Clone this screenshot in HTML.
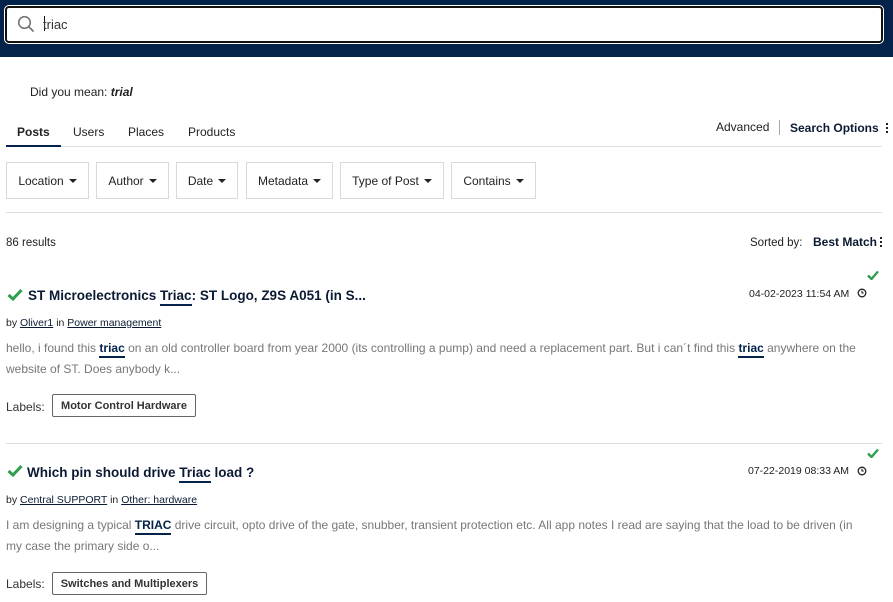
<!DOCTYPE html>
<html><head><meta charset="utf-8">
<style>
*{margin:0;padding:0;box-sizing:border-box}
body{width:893px;height:602px;overflow:hidden;background:#fff;font-family:"Liberation Sans",Arial,sans-serif;color:#222;position:relative}
.hdr{position:absolute;left:0;top:0;width:893px;height:57px;background:#03234b}
.sb{position:absolute;left:5px;top:6px;width:878px;height:37px;background:#fff;border:2px solid #111;border-radius:4px;box-shadow:0 0 0 1px #fff}
.sb .q{position:absolute;left:36px;top:9px;font-size:13px;color:#333}
.caret{position:absolute;left:37px;top:8px;width:1px;height:15px;background:#111}
.abs{position:absolute;white-space:nowrap}
.tab{font-size:12px;color:#222}
.fb{position:absolute;top:162px;height:37px;border:1px solid #d6d9de;font-size:12px;color:#222;display:flex;align-items:center;justify-content:center}
.tri{display:inline-block;width:0;height:0;border-left:4px solid transparent;border-right:4px solid transparent;border-top:4px solid #222;margin-left:5px;vertical-align:middle}
.line{position:absolute;left:6px;width:876px;height:1px;background:#dcdfe4}
.title{font-size:13.5px;font-weight:bold;color:#0b1a33}
.u{border-bottom:2px solid #03234b;padding-bottom:1px}
.meta{font-size:10.5px;color:#222}
.meta a{color:#0b1a33;text-decoration:underline}
.body{font-size:12px;color:#777;line-height:21px}
.body b{color:#03234b;font-weight:bold}
.lbl{font-size:12px;color:#333}
.chip{position:absolute;height:23px;border:1px solid #666;border-radius:2px;font-size:11px;font-weight:bold;color:#333;display:flex;align-items:center;justify-content:center}
.date{font-size:10.5px;color:#222}
</style></head><body>
<div class="hdr"></div>
<div class="sb">
<svg style="position:absolute;left:10px;top:7px" width="18" height="18" viewBox="0 0 18 18"><circle cx="7.5" cy="7.5" r="5.8" fill="none" stroke="#777" stroke-width="1.6"/><line x1="11.8" y1="11.8" x2="16" y2="16" stroke="#777" stroke-width="1.8" stroke-linecap="round"/></svg>
<div class="caret"></div><div class="q">triac</div></div>

<div class="abs" style="left:30px;top:85px;font-size:12px">Did you mean: <i style="font-weight:bold">trial</i></div>

<div class="abs tab" style="left:17px;top:125px;font-weight:bold">Posts</div>
<div class="abs tab" style="left:73px;top:125px">Users</div>
<div class="abs tab" style="left:128px;top:125px">Places</div>
<div class="abs tab" style="left:188px;top:125px">Products</div>
<div class="line" style="top:146px"></div>
<div class="abs" style="left:6px;top:145px;width:55px;height:2px;background:#03234b"></div>

<div class="abs" style="left:716px;top:120px;font-size:12px">Advanced</div>
<div class="abs" style="left:779px;top:120px;width:1px;height:15px;background:#aaa"></div>
<div class="abs" style="left:790px;top:121px;font-size:12px;font-weight:bold;color:#0b1a33">Search Options</div>
<div class="abs" style="left:886px;top:123px;width:2px;height:10px;background:linear-gradient(#222 0,#222 2px,#fff 2px,#fff 4px,#222 4px,#222 6px,#fff 6px,#fff 8px,#222 8px)"></div>

<div class="fb" style="left:6px;width:83px">Location<span class="tri"></span></div>
<div class="fb" style="left:96px;width:73px">Author<span class="tri"></span></div>
<div class="fb" style="left:176px;width:62px">Date<span class="tri"></span></div>
<div class="fb" style="left:246px;width:87px">Metadata<span class="tri"></span></div>
<div class="fb" style="left:340px;width:104px">Type of Post<span class="tri"></span></div>
<div class="fb" style="left:451px;width:85px">Contains<span class="tri"></span></div>
<div class="line" style="top:212px"></div>

<div class="abs" style="left:6px;top:237px;font-size:11.5px">86 results</div>
<div class="abs" style="left:750px;top:237px;font-size:11.5px">Sorted by:</div>
<div class="abs" style="left:813px;top:235px;font-size:12px;font-weight:bold;color:#0b1a33">Best Match</div>
<div class="abs" style="left:880px;top:237px;width:2px;height:10px;background:linear-gradient(#222 0,#222 2px,#fff 2px,#fff 4px,#222 4px,#222 6px,#fff 6px,#fff 8px,#222 8px)"></div>

<!-- result 1 -->
<svg class="abs" style="left:867px;top:270px" width="12" height="10" viewBox="0 0 12 10"><path d="M1 5.5 L4.5 9 L11 1.5" fill="none" stroke="#2e9e4f" stroke-width="2.4"/></svg>
<svg class="abs" style="left:7px;top:288px" width="16" height="13" viewBox="0 0 16 13"><path d="M1.5 7 L6 11 L14.5 2" fill="none" stroke="#2e9e4f" stroke-width="3"/></svg>
<div class="abs title" style="left:28px;top:288px">ST Microelectronics <span class="u">Triac</span>: ST Logo, Z9S A051 (in S...</div>
<div class="abs date" style="left:749px;top:288px">04-02-2023 11:54 AM</div>
<svg class="abs" style="left:857px;top:288px" width="10" height="10" viewBox="0 0 10 10"><circle cx="5" cy="5" r="3.8" fill="none" stroke="#222" stroke-width="1.3"/><path d="M5 2.8 V5 H6.8" fill="none" stroke="#222" stroke-width="1.1"/></svg>
<div class="abs meta" style="left:6px;top:317px">by <a>Oliver1</a> in <a>Power management</a></div>
<div class="abs body" style="left:6px;top:338px">hello, i found this <b class="u">triac</b> on an old controller board from year 2000 (its controlling a pump) and need a replacement part. But i can´t find this <b class="u">triac</b> anywhere on the<br>website of ST. Does anybody k...</div>
<div class="abs lbl" style="left:6px;top:400px">Labels:</div>
<div class="chip" style="left:52px;top:394px;width:144px">Motor Control Hardware</div>
<div class="line" style="top:443px"></div>

<!-- result 2 -->
<svg class="abs" style="left:867px;top:448px" width="12" height="10" viewBox="0 0 12 10"><path d="M1 5.5 L4.5 9 L11 1.5" fill="none" stroke="#2e9e4f" stroke-width="2.4"/></svg>
<svg class="abs" style="left:7px;top:464px" width="16" height="13" viewBox="0 0 16 13"><path d="M1.5 7 L6 11 L14.5 2" fill="none" stroke="#2e9e4f" stroke-width="3"/></svg>
<div class="abs title" style="left:27px;top:465px">Which pin should drive <span class="u">Triac</span> load ?</div>
<div class="abs date" style="left:748px;top:465px">07-22-2019 08:33 AM</div>
<svg class="abs" style="left:857px;top:466px" width="10" height="10" viewBox="0 0 10 10"><circle cx="5" cy="5" r="3.8" fill="none" stroke="#222" stroke-width="1.3"/><path d="M5 2.8 V5 H6.8" fill="none" stroke="#222" stroke-width="1.1"/></svg>
<div class="abs meta" style="left:6px;top:494px">by <a>Central SUPPORT</a> in <a>Other: hardware</a></div>
<div class="abs body" style="left:6px;top:515px">I am designing a typical <b class="u">TRIAC</b> drive circuit, opto drive of the gate, snubber, transient protection etc. All app notes I read are saying that the load to be driven (in<br>my case the primary side o...</div>
<div class="abs lbl" style="left:6px;top:577px">Labels:</div>
<div class="chip" style="left:52px;top:572px;width:155px">Switches and Multiplexers</div>
</body></html>
